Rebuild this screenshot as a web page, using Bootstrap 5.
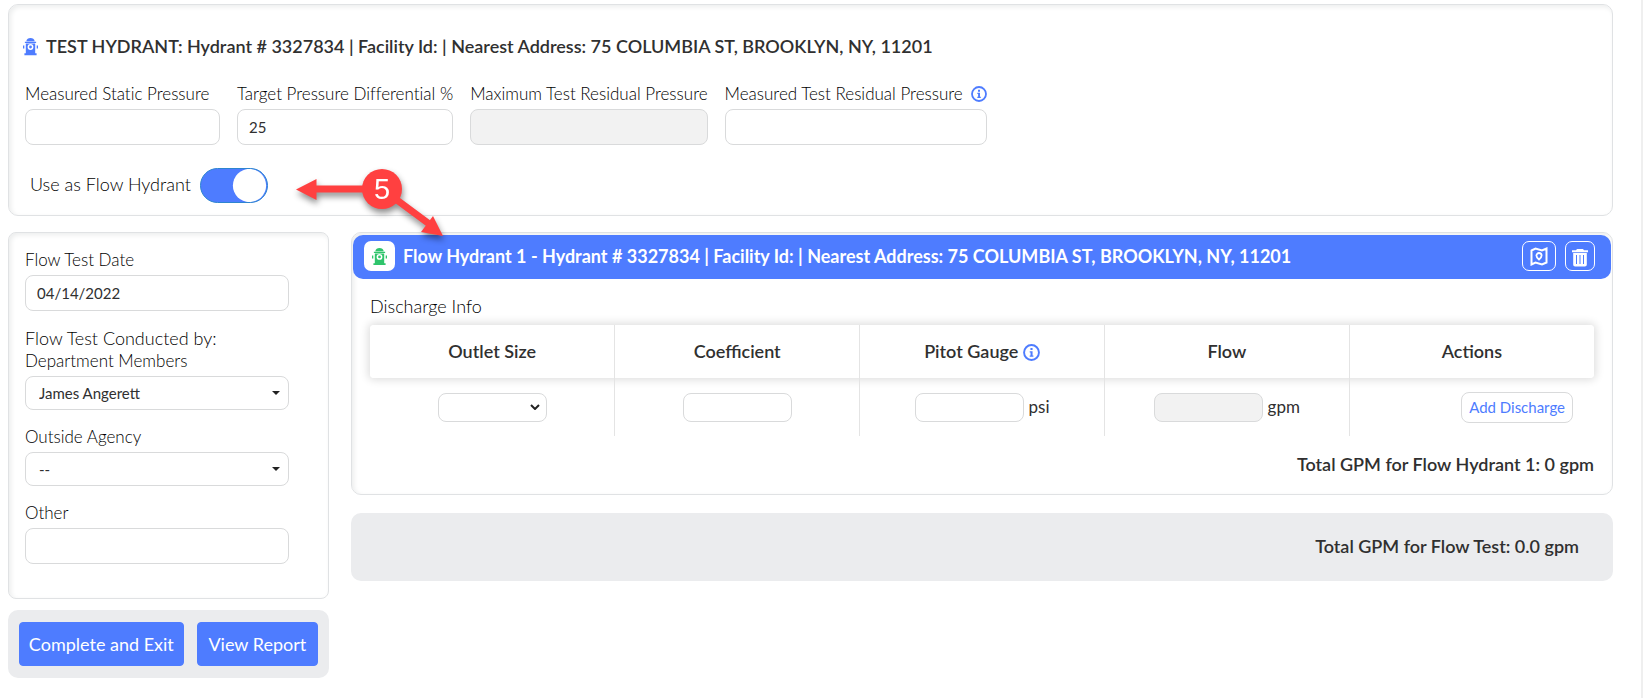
<!DOCTYPE html>
<html lang="en">
<head>
<meta charset="utf-8">
<meta name="viewport" content="width=device-width, initial-scale=1">
<title>Hydrant Flow Test</title>
<link href="https://cdn.jsdelivr.net/npm/bootstrap@5.3.0/dist/css/bootstrap.min.css" rel="stylesheet">
<style>
:root { --brand: #4e7cff; --ink: #303030; --line: #d9dadb; --soft: #ebecee; }
body { font-family: Lato, sans-serif; font-size: 17px; line-height: 22px; color: var(--ink); background: #fff; }
.page { border-right: 2px solid #efefef; padding: 4px 28px 20px 8px; }
.panel { border: 1px solid #e0e2e4; border-radius: 10px; background: #fff; box-shadow: inset 2px 2px 5px #eceded; }
.panel-side { border-radius: 8px; }
.test-panel { padding: 30px 14px 12px; }
.semi { font-weight: 600; font-size: 18px; line-height: 22px; }
.light-text, .form-label { font-weight: 300; color: #000; font-variant-ligatures: none; }
.light-text { font-size: 18px; }
.form-label { font-size: 17px; line-height: 22px; margin-bottom: 4px; }
.form-control, .form-select { color: var(--ink); border-color: var(--line); border-radius: 8px; font-size: 15px; line-height: 22px; padding: 6px 11px; height: 36px; }
.form-select { height: 34px; padding: 5px 13px; background-image: url("data:image/svg+xml,%3Csvg xmlns='http://www.w3.org/2000/svg' viewBox='0 0 8 4'%3E%3Cpath fill='%23222' d='M0 0h8L4 4z'/%3E%3C/svg%3E"); background-size: 8px 4px; background-position: right 8px center; }
.form-control:disabled { background: #f2f2f2; }
.icon-brand { color: var(--brand); }
.icon-green { color: #2fc46b; }
.fields { gap: 17px; margin: 26px 2px 0; }
.fields .form-control { width: 0; min-width: 100%; }
.field { min-width: 195px; }
.toggle-row { margin: 23px 7px 0; gap: 9px; }
.toggle-row label { padding-bottom: 3px; }
.form-switch .form-check-input.flow-toggle { width: 68px; height: 35px; margin: 0; float: none; background-color: var(--brand); border: 1px solid #2e85d0; background-size: 35px 35px; background-image: url("data:image/svg+xml,%3Csvg xmlns='http://www.w3.org/2000/svg' viewBox='-4 -4 8 8'%3E%3Ccircle r='3.8' fill='%23fff'/%3E%3C/svg%3E"); }
.columns { gap: 22px; }
.side { width: 321px; flex: none; }
.side-form { padding: 16px 39px 34px 16px; }
.side-field { margin-bottom: 16px; }
.side-actions { background: var(--soft); border-radius: 10px; padding: 12px 11px; margin-top: 11px; gap: 13px; }
.btn-brand { --bs-btn-color: #fff; --bs-btn-bg: var(--brand); --bs-btn-border-color: var(--brand); --bs-btn-hover-color: #fff; --bs-btn-hover-bg: #3968ec; --bs-btn-padding-x: 0; --bs-btn-padding-y: 10px; --bs-btn-border-radius: 4px; --bs-btn-font-size: 18px; line-height: 22px; white-space: nowrap; }
.btn-complete { flex: 165 0 0; }
.btn-report { flex: 121 0 0; }
.flow-head { background: var(--brand); color: #fff; border-radius: 10px; margin: 2px 1px 0; padding: 6px 16px 8px 11px; height: 44px; }
.flow-title { font-size: 18px; font-weight: 700; margin-left: 8px; }
.hydrant-tile { width: 31px; height: 30px; background: #fff; border-radius: 7px; }
.btn-tile { --bs-btn-padding-x: 0; --bs-btn-padding-y: 0; --bs-btn-border-radius: 7px; --bs-btn-border-color: #fff; --bs-btn-color: #fff; --bs-btn-hover-color: #fff; height: 30px; }
.tile-map { width: 34px; }
.tile-trash { width: 30px; margin-left: 9px; }
.flow-body { padding: 16px 18px 19px; }
.discharge { table-layout: fixed; margin: 8px 0 17px; --bs-table-bg: transparent; color: var(--ink); text-align: center; }
.discharge thead { box-shadow: 0 0 8px 2px #dedede; border-radius: 4px; }
.discharge th { font-weight: 600; font-size: 18px; height: 53px; padding: 0 0 2px; vertical-align: middle; border: 0; border-right: 1px solid #e4e4e4; background: #fff; }
.discharge td { height: 58px; padding: 0; vertical-align: middle; border: 0; border-right: 1px solid #e4e4e4; }
.discharge th:last-child, .discharge td:last-child { border-right: 0; }
.discharge th:first-child { border-radius: 4px 0 0 4px; }
.discharge th:last-child { border-radius: 0 4px 4px 0; }
.discharge .form-control, .discharge .form-select { width: 109px; height: 29px; padding: 2px 8px; flex: none; }
.discharge .form-select { background-size: 10px 6px; background-position: right 6px center; background-image: url("data:image/svg+xml,%3Csvg xmlns='http://www.w3.org/2000/svg' viewBox='0 0 10 6'%3E%3Cpath fill='none' stroke='%23222' stroke-width='2' d='M1 1l4 4 4-4'/%3E%3C/svg%3E"); }
.unit-gap { gap: 5px; }
.btn-add { --bs-btn-color: var(--brand); --bs-btn-border-color: var(--line); --bs-btn-border-radius: 8px; --bs-btn-padding-x: 7px; --bs-btn-padding-y: 3px; --bs-btn-font-size: 15px; line-height: 23px; white-space: nowrap; margin-right: 21px; }
.grand-total { background: var(--soft); border-radius: 10px; margin-top: 18px; padding: 22px 34px 24px; text-align: right; }
.callout { left: 290px; top: 160px; pointer-events: none; z-index: 5; filter: drop-shadow(1px 4px 3px rgba(0,0,0,.45)); }
</style>
</head>
<body>
<svg class="d-none">
  <symbol id="hydrant" viewBox="0 0 16 19">
    <path fill="currentColor" d="M3.500 3.800C4 1.300 5.700.3 8 .3s4 1 4.500 3.500zM2 4.300h12v1.500H2zM3 6.200h10V16.800h1.500v1.900h-13v-1.900H3zM0 8.300h1.400v3.400H0zM14.600 8.300H16v3.400h-1.400z"/>
    <circle cx="8" cy="10" r="2.300" fill="none" stroke="#fff" stroke-width="1.600"/>
  </symbol>
  <symbol id="info" viewBox="0 0 16 16">
    <circle cx="8" cy="8" r="7" fill="none" stroke="currentColor" stroke-width="1.800"/>
    <path fill="currentColor" d="M7 3.800h2v1.900H7zM6.300 6.800H9v4h.8v1.300H6.300v-1.300H7.100V8.100h-.8z"/>
  </symbol>
</svg>

<div class="page min-vh-100 position-relative">
  <section class="panel test-panel">
    <h1 class="semi d-flex align-items-center m-0">
      <svg class="icon-brand me-2" width="15" height="19" aria-hidden="true"><use href="#hydrant"/></svg>TEST HYDRANT: Hydrant # 3327834 | Facility Id: | Nearest Address: 75 COLUMBIA ST, BROOKLYN, NY, 11201
    </h1>
    <div class="fields d-flex flex-wrap">
      <div class="field"><label class="form-label" for="static">Measured Static Pressure</label><input class="form-control" id="static"></div>
      <div><label class="form-label" for="target">Target Pressure Differential %</label><input class="form-control" id="target" value="25"></div>
      <div><label class="form-label" for="maxres">Maximum Test Residual Pressure</label><input class="form-control" id="maxres" disabled></div>
      <div><label class="form-label d-flex align-items-center" for="measured">Measured Test Residual Pressure <svg class="icon-brand ms-2" width="16" height="16" aria-hidden="true"><use href="#info"/></svg></label><input class="form-control" id="measured"></div>
    </div>
    <div class="toggle-row form-switch d-flex align-items-center p-0">
      <label for="useflow" class="light-text">Use as Flow Hydrant</label>
      <input class="form-check-input flow-toggle" type="checkbox" role="switch" id="useflow" checked>
    </div>
  </section>

  <div class="columns d-flex align-items-start mt-3">
    <aside class="side">
      <form class="panel panel-side side-form">
        <div class="side-field"><label class="form-label" for="date">Flow Test Date</label><input class="form-control" id="date" value="04/14/2022"></div>
        <div class="side-field"><label class="form-label" for="members"><span class="light-text">Flow Test Conducted by:</span><br>Department Members</label><select class="form-select" id="members"><option>James Angerett</option></select></div>
        <div class="side-field"><label class="form-label" for="agency">Outside Agency</label><select class="form-select" id="agency"><option>--</option></select></div>
        <div><label class="form-label" for="other">Other</label><input class="form-control" id="other"></div>
      </form>
      <div class="side-actions d-flex">
        <button type="button" class="btn btn-brand btn-complete">Complete and Exit</button>
        <button type="button" class="btn btn-brand btn-report">View Report</button>
      </div>
    </aside>

    <main class="flex-grow-1">
      <section class="panel">
        <header class="flow-head d-flex align-items-center">
          <span class="hydrant-tile d-flex align-items-center justify-content-center"><svg class="icon-green" width="15" height="19" aria-hidden="true"><use href="#hydrant"/></svg></span>
          <span class="flow-title me-auto">Flow Hydrant 1 - Hydrant # 3327834 | Facility Id: | Nearest Address: 75 COLUMBIA ST, BROOKLYN, NY, 11201</span>
          <button type="button" class="btn btn-tile tile-map d-flex align-items-center justify-content-center" aria-label="Show on map">
            <svg width="18" height="19" viewBox="0 0 18 19" fill="none" stroke="currentColor" stroke-width="2"><path d="M1.500 3.500 5.500 1.500 12 3.500 16.500 1.500V15.500L12 17.500 5.500 15.500 1.500 17.500z"/><path stroke-width="1.800" d="M9 6a2.600 2.600 0 0 1 2.600 2.600C11.600 10.500 9 12.600 9 12.600S6.400 10.500 6.400 8.600A2.600 2.600 0 0 1 9 6z"/></svg>
          </button>
          <button type="button" class="btn btn-tile tile-trash d-flex align-items-center justify-content-center" aria-label="Delete">
            <svg class="mt-1" width="16" height="18" viewBox="0 0 16 18"><path fill="currentColor" d="M5 0h6l1 1.200h4v2H0v-2h4zM1.200 4h13.600v11.500c0 1.300-.7 2-2 2H3.200c-1.300 0-2-.7-2-2z"/><path stroke="#4e7cff" stroke-width="1" d="M4.500 6v9M8 6v9M11.500 6v9"/></svg>
          </button>
        </header>
        <div class="flow-body">
          <div class="light-text">Discharge Info</div>
          <table class="table discharge">
            <thead><tr>
              <th scope="col">Outlet Size</th><th scope="col">Coefficient</th>
              <th scope="col">Pitot Gauge <svg class="icon-brand" width="17" height="17" aria-hidden="true"><use href="#info"/></svg></th>
              <th scope="col">Flow</th><th scope="col">Actions</th>
            </tr></thead>
            <tbody><tr>
              <td><select class="form-select mx-auto" aria-label="Outlet Size"><option></option></select></td>
              <td><input class="form-control mx-auto" aria-label="Coefficient"></td>
              <td><div class="unit-gap d-flex align-items-center justify-content-center"><input class="form-control" id="pitot"><label for="pitot">psi</label></div></td>
              <td><div class="unit-gap d-flex align-items-center justify-content-center"><input class="form-control" id="flow" disabled><label for="flow">gpm</label></div></td>
              <td class="text-end"><button type="button" class="btn btn-add">Add Discharge</button></td>
            </tr></tbody>
          </table>
          <div class="semi text-end">Total GPM for Flow Hydrant 1: 0 gpm</div>
        </div>
      </section>
      <div class="grand-total semi">Total GPM for Flow Test: 0.0 gpm</div>
    </main>
  </div>

  <svg class="callout position-absolute" width="164" height="86" aria-hidden="true">
    <g fill="#ff4040" stroke="#ff4040">
      <path stroke-width="7" d="M24 29H92M92 29 142 66"/>
      <path stroke="none" d="M6 29.500 26.500 19V40zM153 76 131 72 143 56z"/>
      <circle cx="92" cy="29" r="20" stroke="none"/>
    </g>
    <text x="92" y="39" text-anchor="middle" fill="#fff" font-family="Liberation Sans, sans-serif" font-size="29">5</text>
  </svg>
</div>
<script src="https://cdn.jsdelivr.net/npm/bootstrap@5.3.0/dist/js/bootstrap.bundle.min.js"></script>
</body>
</html>
